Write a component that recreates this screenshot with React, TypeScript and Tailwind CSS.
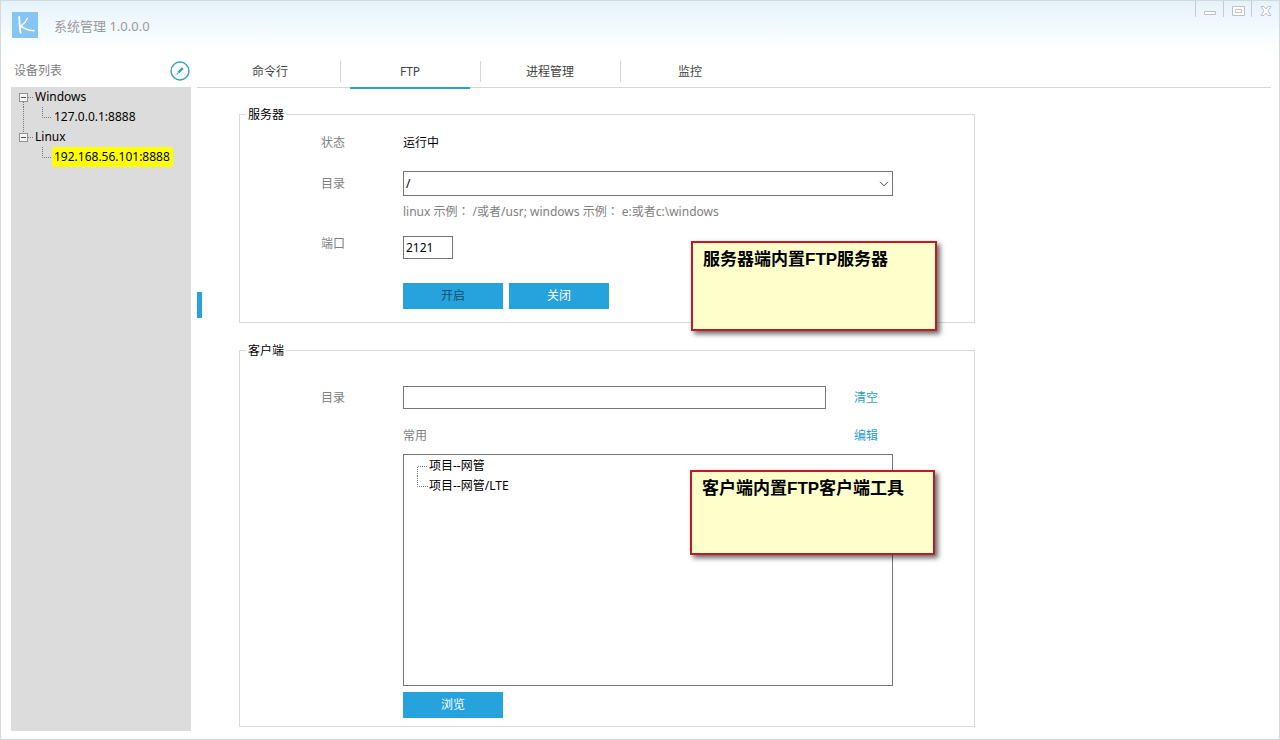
import type { ReactNode } from "react";

const buttonClass = "h-[26px] w-[100px] bg-[#26a3dd] text-center";
const boxClass = "border border-[#767676] bg-white px-[2px] text-black outline-none";

function Logo() {
  return (
    <svg width="26" height="26" viewBox="0 0 26 26" aria-hidden="true">
      <rect width="26" height="26" fill="#87c5f4" />
      <g fill="none" stroke="#fff" strokeLinecap="round">
        <path d="M7.2 5 C7.4 11 7.8 16 8.6 20.8" strokeWidth="1.8" />
        <path d="M15.5 6.2 C14 9.5 12 12 8.8 14" strokeWidth="1.3" />
        <path d="M9 14.2 C12 16.8 16.5 18.4 22 18.8" strokeWidth="1.6" />
      </g>
    </svg>
  );
}

function WindowButton({ label, children }: { label: string; children: ReactNode }) {
  return (
    <button
      type="button"
      aria-label={label}
      className="flex h-4 w-7 items-end justify-center border-l border-[#c3cdd3]"
    >
      <svg width="14" height="12" viewBox="0 0 14 12" fill="#fff" stroke="#bcc4ca">
        {children}
      </svg>
    </button>
  );
}

function RootGuide({ first }: { first?: boolean }) {
  return (
    <svg width="22" height="20" viewBox="0 0 22 20" fill="none" aria-hidden="true">
      <path
        d={first ? "M12.5 15V20M17 10.5H22" : "M12.5 0V6M17 10.5H22"}
        stroke="#777"
        strokeDasharray="1 1"
      />
      <rect x="8.5" y="6.5" width="8" height="8" fill="#f4f4f4" stroke="#929292" />
      <path d="M10 10.5H15" stroke="#555" />
    </svg>
  );
}

function ChildGuide({ through }: { through?: boolean }) {
  return (
    <svg width="41" height="20" viewBox="0 0 41 20" fill="none" aria-hidden="true">
      <path
        d={through ? "M12.5 0V20M31.5 0V10.5H41" : "M31.5 0V10.5H41"}
        stroke="#777"
        strokeDasharray="1 1"
      />
    </svg>
  );
}

function LeafGuide({ last }: { last?: boolean }) {
  return (
    <svg width="25" height="20" viewBox="0 0 25 20" fill="none" aria-hidden="true">
      <path
        d={last ? "M13.5 0V10.5H24" : "M13.5 20V10.5H24"}
        stroke="#777"
        strokeDasharray="1 1"
      />
    </svg>
  );
}

function DeviceTree() {
  return (
    <ul className="flex-1 bg-[#dcdcdc] leading-5 text-black">
      <li>
        <div className="flex h-5">
          <RootGuide first />
          <span className="px-[2px]">Windows</span>
        </div>
        <ul>
          <li className="flex h-5">
            <ChildGuide through />
            <span className="px-[2px]">127.0.0.1:8888</span>
          </li>
        </ul>
      </li>
      <li>
        <div className="flex h-5">
          <RootGuide />
          <span className="px-[2px]">Linux</span>
        </div>
        <ul>
          <li className="flex h-5">
            <ChildGuide />
            <span className="rounded-xs bg-[#ffff00] pr-[3px] pl-[2px]">192.168.56.101:8888</span>
          </li>
        </ul>
      </li>
    </ul>
  );
}

function Tabs() {
  const tabs = ["命令行", "FTP", "进程管理", "监控"];
  return (
    <nav role="tablist" className="flex h-[37px] border-b border-[#d6d6d6] pl-1">
      {tabs.map((tab, i) => (
        <div key={tab} className="flex">
          {i > 0 && <span className="mt-[10px] h-[21px] w-px bg-[#d6d6d6]" />}
          <button
            type="button"
            role="tab"
            aria-selected={tab === "FTP"}
            className="flex h-[38px] w-[139px] justify-center pr-[10px] pl-[9px] text-[#444]"
          >
            <span
              className={
                tab === "FTP"
                  ? "h-full w-full border-b-2 border-[#2b9fce] pt-[13px] leading-4"
                  : "h-full w-full pt-[13px] leading-4"
              }
            >
              {tab}
            </span>
          </button>
        </div>
      ))}
    </nav>
  );
}

function Note({ className, children }: { className: string; children: ReactNode }) {
  return (
    <p
      className={`absolute border-2 border-[#c01a22] bg-[#ffffcb] px-[10px] py-[7px] font-['Liberation_Sans','Noto_Sans_CJK_SC',sans-serif] text-[17px] leading-5 font-bold text-black shadow-[3px_3px_5px_rgba(0,0,0,0.6)] ${className}`}
    >
      {children}
    </p>
  );
}

function ServerPanel() {
  return (
    <fieldset className="relative w-full max-w-[736px] border border-[#d9d9d9] px-[81px] pb-[13px]">
      <legend className="-ml-[75px] px-[2px] pt-[2px] leading-4 text-black">服务器</legend>
      <div className="mt-[10px] flex h-5 items-center">
        <span className="w-[82px] shrink-0">状态</span>
        <span className="text-black">运行中</span>
      </div>
      <div className="mt-[18px] flex h-[25px] items-center">
        <label htmlFor="server-dir" className="w-[82px] shrink-0">目录</label>
        <div className="relative h-full flex-1">
          <select id="server-dir" className={`${boxClass} h-full w-full appearance-none`}>
            <option>/</option>
          </select>
          <svg
            width="10"
            height="6"
            viewBox="0 0 10 6"
            fill="none"
            stroke="#444"
            className="pointer-events-none absolute top-[10px] right-1"
            aria-hidden="true"
          >
            <path d="M1 .8 5 4.8 9 .8" />
          </svg>
        </div>
      </div>
      <p className="mt-2 pl-[82px] font-['Noto_Sans','Noto_Sans_CJK_TC',sans-serif] leading-4">
        linux 示例： /或者/usr; windows 示例： e:或者c:\windows
      </p>
      <div className="mt-4 flex h-[23px] items-start">
        <label htmlFor="server-port" className="w-[82px] shrink-0">端口</label>
        <input id="server-port" defaultValue="2121" className={`${boxClass} h-full w-[50px]`} />
      </div>
      <div className="mt-6 flex gap-[6px] pl-[82px]">
        <button type="button" disabled className={`${buttonClass} text-[#174f6e]`}>开启</button>
        <button type="button" className={`${buttonClass} text-white`}>关闭</button>
      </div>
      <Note className="right-[37px] -bottom-[9px] h-[90px] w-[246px]">服务器端内置FTP服务器</Note>
    </fieldset>
  );
}

function ClientPanel() {
  return (
    <fieldset className="relative mt-[18px] w-full max-w-[736px] border border-[#d9d9d9] px-[81px] pb-2">
      <legend className="-ml-[75px] px-[2px] pt-[2px] leading-4 text-black">客户端</legend>
      <div className="mt-[27px] flex h-[23px] items-center">
        <label htmlFor="client-dir" className="w-[82px] shrink-0">目录</label>
        <input id="client-dir" className={`${boxClass} h-full min-w-0 flex-1`} />
        <a href="#clear" className="ml-7 w-[39px] text-[#2b9fce]">清空</a>
      </div>
      <div className="mt-[19px] flex pl-[82px] leading-4">
        <span className="flex-1">常用</span>
        <a href="#edit" className="w-[39px] text-[#2b9fce]">编辑</a>
      </div>
      <div className="mt-[10px] pl-[82px]">
        <ul className="h-[232px] border border-[#767676] pt-px leading-5 text-black">
          <li className="flex">
            <LeafGuide />
            项目--网管
          </li>
          <li className="flex">
            <LeafGuide last />
            项目--网管/LTE
          </li>
        </ul>
        <button type="button" className={`${buttonClass} mt-[6px] text-white`}>浏览</button>
      </div>
      <Note className="top-[111px] right-[39px] h-[85px] w-[245px]">客户端内置FTP客户端工具</Note>
    </fieldset>
  );
}

export default function App() {
  return (
    <div className="flex min-h-screen flex-col border border-[#d3dadd] bg-white bg-[linear-gradient(#e6f2fa,#f5fbff_30px,#ffffff_50px)] pb-2 font-['Noto_Sans','Noto_Sans_CJK_SC',sans-serif] text-xs leading-4 text-[#808080]">
      <header className="flex h-[50px] items-start">
        <div className="flex flex-1 items-center gap-4 pt-[11px] pl-[11px]">
          <Logo />
          <h1 className="pt-px text-[13px] text-[#9a9a9a]">系统管理 1.0.0.0</h1>
        </div>
        <div className="flex">
          <WindowButton label="最小化">
            <path d="M1.5 6.5H12.5V9.5H1.5Z" />
          </WindowButton>
          <WindowButton label="最大化">
            <path d="M1.5 1.5H13.5V10.5H1.5Z" />
            <path d="M4.5 4.5H10.5V7.5H4.5Z" />
          </WindowButton>
          <WindowButton label="关闭">
            <path d="M2 1.5H5L7 4 9 1.5H12L9 6 12 10.5H9L7 8 5 10.5H2L5 6Z" />
          </WindowButton>
        </div>
      </header>

      <div className="flex flex-1">
        <aside className="ml-[10px] flex w-[180px] shrink-0 flex-col">
          <div className="flex h-9 items-center justify-between pt-[3px] pr-px pl-[3px]">
            <h2>设备列表</h2>
            <button type="button" aria-label="编辑设备列表">
              <svg width="20" height="20" viewBox="0 0 20 20" fill="none" aria-hidden="true">
                <circle cx="10" cy="10" r="9" stroke="#36a2c4" strokeWidth="1.4" />
                <path d="M8.3 11.7 12.8 7.2" stroke="#36a2c4" strokeWidth="2.4" />
                <path d="M6.3 13.7 7.1 11.4 8.6 12.9Z" fill="#36a2c4" />
              </svg>
            </button>
          </div>
          <DeviceTree />
        </aside>

        <main className="mr-2 ml-[6px] min-w-0 flex-1">
          <Tabs />
          <div className="flex">
            <button
              type="button"
              aria-label="收起设备列表"
              className="mt-[204px] h-[26px] w-[5px] shrink-0 bg-[#26a3dd]"
            />
            <div className="min-w-0 flex-1 pt-[17px] pl-[37px]">
              <ServerPanel />
              <ClientPanel />
            </div>
          </div>
        </main>
      </div>
    </div>
  );
}
